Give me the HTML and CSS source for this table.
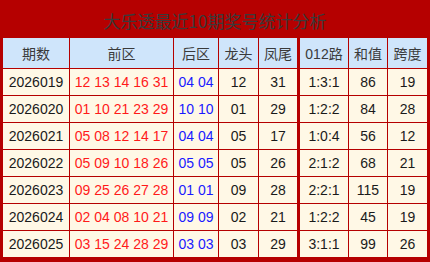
FILE: index.html
```html
<!DOCTYPE html>
<html lang="zh-CN">
<head>
<meta charset="utf-8">
<title>大乐透最近10期奖号统计分析</title>
<link rel="stylesheet" href="styles.css">
</head>
<body>
<div class="panel">
  <div class="title">大乐透最近10期奖号统计分析</div>
  <div class="grid">
    <div class="cell head c1">期数</div>
    <div class="cell head">前区</div>
    <div class="cell head">后区</div>
    <div class="cell head">龙头</div>
    <div class="cell head">凤尾</div>
    <div class="cell head c6">012路</div>
    <div class="cell head">和值</div>
    <div class="cell head">跨度</div>

    <div class="cell row c1">2026019</div>
    <div class="cell row front">12 13 14 16 31</div>
    <div class="cell row back">04 04</div>
    <div class="cell row">12</div>
    <div class="cell row">31</div>
    <div class="cell row c6">1:3:1</div>
    <div class="cell row">86</div>
    <div class="cell row">19</div>

    <div class="cell row c1">2026020</div>
    <div class="cell row front">01 10 21 23 29</div>
    <div class="cell row back">10 10</div>
    <div class="cell row">01</div>
    <div class="cell row">29</div>
    <div class="cell row c6">1:2:2</div>
    <div class="cell row">84</div>
    <div class="cell row">28</div>

    <div class="cell row c1">2026021</div>
    <div class="cell row front">05 08 12 14 17</div>
    <div class="cell row back">04 04</div>
    <div class="cell row">05</div>
    <div class="cell row">17</div>
    <div class="cell row c6">1:0:4</div>
    <div class="cell row">56</div>
    <div class="cell row">12</div>

    <div class="cell row c1">2026022</div>
    <div class="cell row front">05 09 10 18 26</div>
    <div class="cell row back">05 05</div>
    <div class="cell row">05</div>
    <div class="cell row">26</div>
    <div class="cell row c6">2:1:2</div>
    <div class="cell row">68</div>
    <div class="cell row">21</div>

    <div class="cell row c1">2026023</div>
    <div class="cell row front">09 25 26 27 28</div>
    <div class="cell row back">01 01</div>
    <div class="cell row">09</div>
    <div class="cell row">28</div>
    <div class="cell row c6">2:2:1</div>
    <div class="cell row">115</div>
    <div class="cell row">19</div>

    <div class="cell row c1">2026024</div>
    <div class="cell row front">02 04 08 10 21</div>
    <div class="cell row back">09 09</div>
    <div class="cell row">02</div>
    <div class="cell row">21</div>
    <div class="cell row c6">1:2:2</div>
    <div class="cell row">45</div>
    <div class="cell row">19</div>

    <div class="cell row c1">2026025</div>
    <div class="cell row front">03 15 24 28 29</div>
    <div class="cell row back">03 03</div>
    <div class="cell row">03</div>
    <div class="cell row">29</div>
    <div class="cell row c6">3:1:1</div>
    <div class="cell row">99</div>
    <div class="cell row">26</div>
  </div>
</div>
</body>
</html>
```
FILE: styles.css
```css
html, body {
  margin: 0;
  padding: 0;
  background: #ffffff;
}

.panel {
  box-sizing: border-box;
  width: 430px;
  height: 262px;
  background: #b50000;
  padding: 0 3px 5px 3px;
  font-family: "Liberation Sans", "Noto Sans CJK SC", sans-serif;
}

.title {
  box-sizing: border-box;
  height: 38px;
  padding-top: 4px;
  line-height: 34px;
  text-align: center;
  font-family: "Noto Sans CJK SC", "Noto Sans", sans-serif;
  font-size: 17px;
  color: #3a3a3a;
}

.grid {
  display: grid;
  grid-template-columns: 66px 104px 45px 40px 39px 51px 39px 40px;
  grid-template-rows: 30px repeat(7, 27px);
}

.cell {
  box-sizing: border-box;
  display: flex;
  align-items: center;
  justify-content: center;
  font-size: 14px;
  white-space: nowrap;
  border-left: 1px solid #b50000;
}

.cell.c1 {
  border-left: 0;
}

.cell.c6 {
  border-left: 3px solid #b50000;
}

.head {
  background: #cfe5fb;
  color: #3a3a3a;
}

.row {
  background: #fff8e6;
  color: #1a1a1a;
  border-top: 1px solid #b50000;
}

.front {
  color: #ff1a1a;
}

.back {
  color: #1a1aff;
}
```
